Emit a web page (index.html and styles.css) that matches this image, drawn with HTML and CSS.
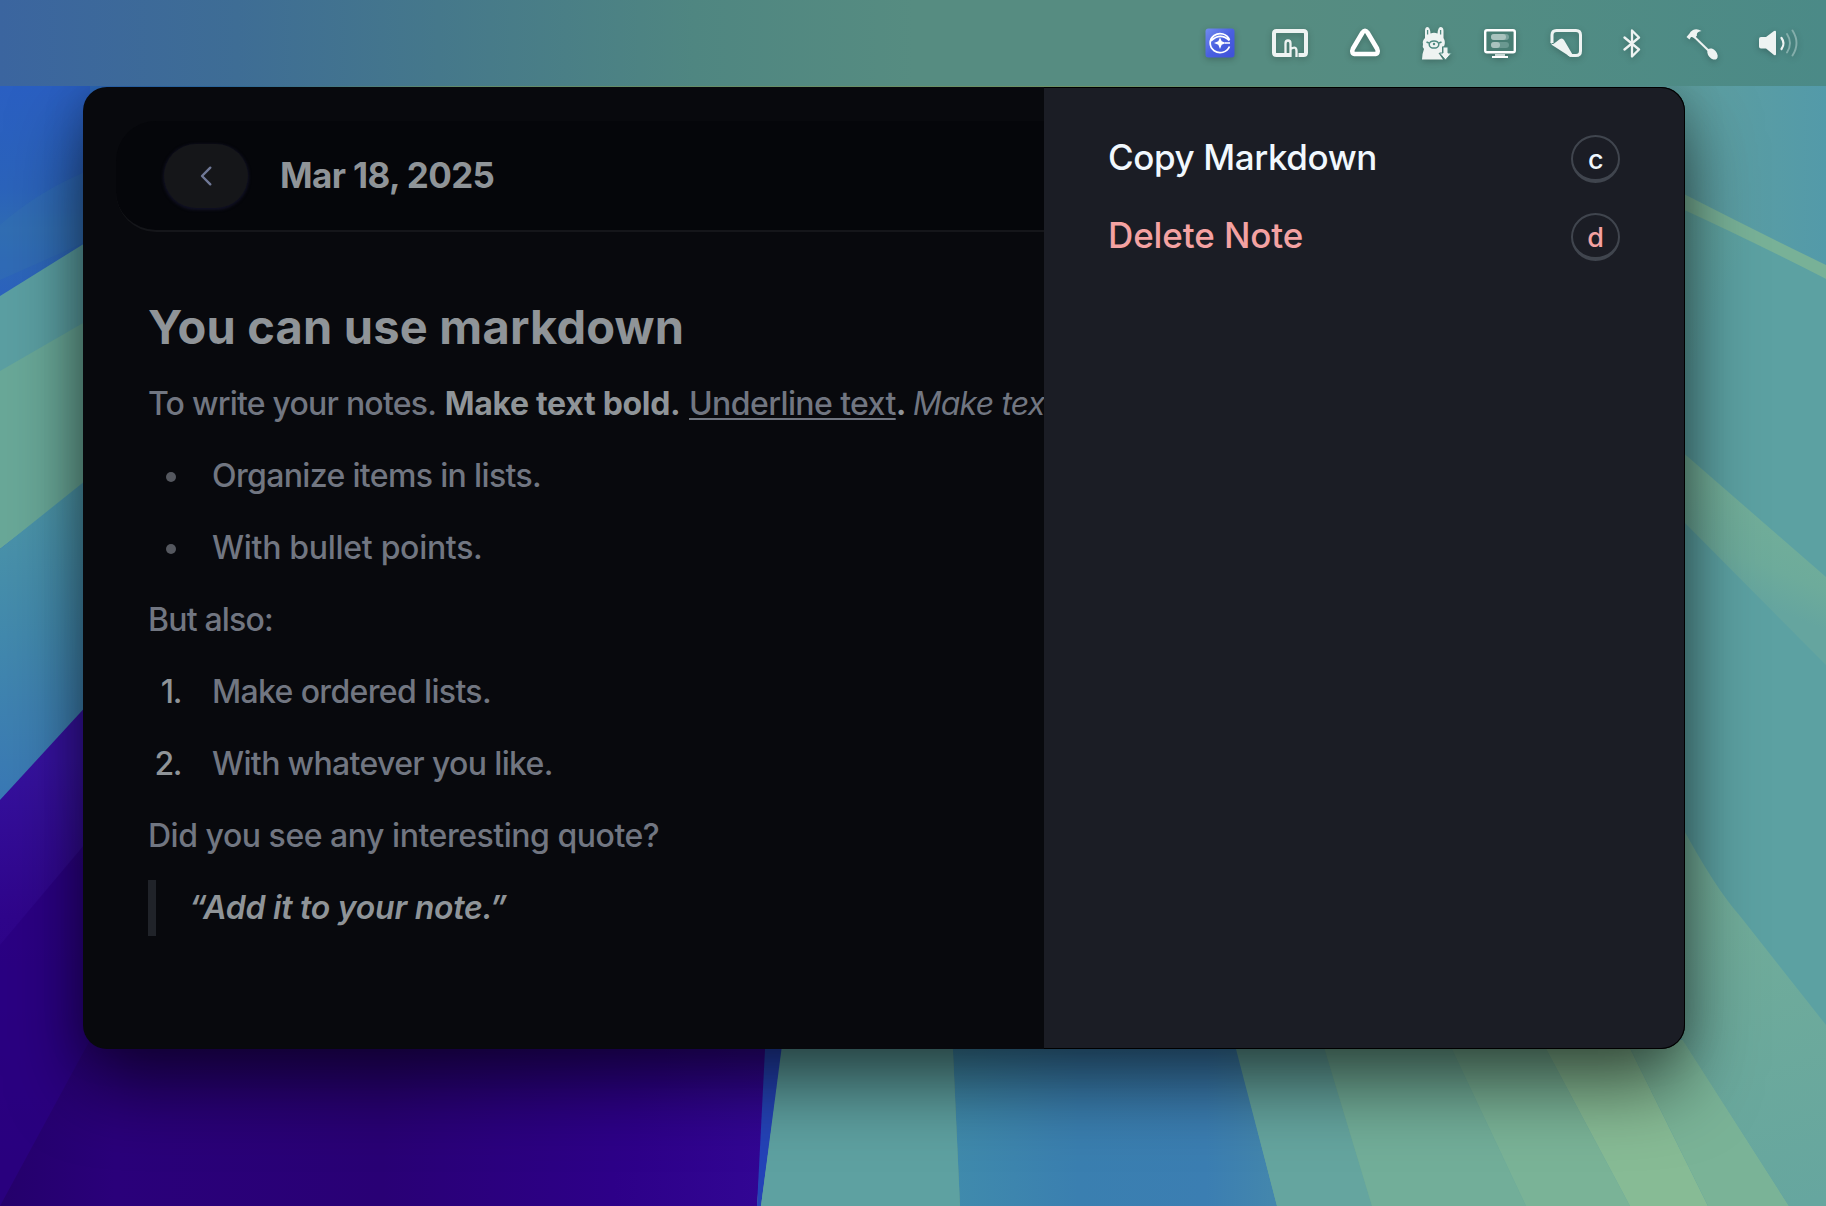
FILE: index.html
```
<!DOCTYPE html>
<html lang="en">
<head>
<meta charset="utf-8">
<title>Notes</title>
<link rel="stylesheet" href="styles.css">
</head>
<body>
<svg class="wallpaper" viewBox="0 0 1826 1206" preserveAspectRatio="none" aria-hidden="true">
  <defs>
    <linearGradient id="sky" x1="0" y1="0" x2="1" y2="0"><stop offset="0" stop-color="#295fc0"/><stop offset=".12" stop-color="#3479b6"/><stop offset=".25" stop-color="#76a77e"/><stop offset=".6" stop-color="#83ad79"/><stop offset=".78" stop-color="#68a89a"/><stop offset=".93" stop-color="#5e9fa1"/><stop offset="1" stop-color="#539aa9"/></linearGradient>
    <linearGradient id="blueL" x1="0" y1="86" x2="0" y2="290" gradientUnits="userSpaceOnUse"><stop offset="0" stop-color="#2a5fc2"/><stop offset=".5" stop-color="#2b63bb"/><stop offset=".7" stop-color="#2f6bb4"/><stop offset="1" stop-color="#2c63bd"/></linearGradient>
    <linearGradient id="tealL" x1="0" y1="500" x2="30" y2="800" gradientUnits="userSpaceOnUse"><stop offset="0" stop-color="#4c95a8"/><stop offset=".45" stop-color="#4289ad"/><stop offset="1" stop-color="#3978b5"/></linearGradient>
    <linearGradient id="purple" x1="0" y1="760" x2="0" y2="1206" gradientUnits="userSpaceOnUse"><stop offset="0" stop-color="#36129f"/><stop offset=".35" stop-color="#2f058b"/><stop offset="1" stop-color="#2a0078"/></linearGradient>
    <linearGradient id="purpleB" x1="0" y1="0" x2="765" y2="0" gradientUnits="userSpaceOnUse"><stop offset="0" stop-color="#24006b"/><stop offset=".15" stop-color="#2a007a"/><stop offset=".5" stop-color="#290075"/><stop offset=".8" stop-color="#2d0088"/><stop offset="1" stop-color="#320694"/></linearGradient>
    <linearGradient id="blueB" x1="950" y1="0" x2="1270" y2="0" gradientUnits="userSpaceOnUse"><stop offset="0" stop-color="#408bac"/><stop offset=".4" stop-color="#3a7fb0"/><stop offset=".8" stop-color="#3b7eb2"/><stop offset="1" stop-color="#4386ad"/></linearGradient>
    <linearGradient id="tealR" x1="1685" y1="0" x2="1826" y2="60" gradientUnits="userSpaceOnUse"><stop offset="0" stop-color="#69a89c"/><stop offset="1" stop-color="#5ca1a2"/></linearGradient>
    <linearGradient id="greenFade" x1="1750" y1="500" x2="1715" y2="585" gradientUnits="userSpaceOnUse"><stop offset="0" stop-color="#72ae99"/><stop offset=".6" stop-color="#6dab9b"/><stop offset="1" stop-color="#65a59f"/></linearGradient>
    <linearGradient id="greenR" x1="1700" y1="880" x2="1800" y2="1206" gradientUnits="userSpaceOnUse"><stop offset="0" stop-color="#72ad99"/><stop offset="1" stop-color="#66a69f"/></linearGradient>
  </defs>
  <rect width="1826" height="1206" fill="url(#sky)"/>
  <path fill="url(#blueL)" d="M0 86H90V240L0 296Z"/>
  <path fill="#3474b2" opacity=".4" d="M0 225Q40 190 90 170V240L0 280Z"/>
  <path fill="#5b9fa2" d="M0 296L90 240V380H0Z"/>
  <path fill="#69a898" d="M0 371L90 319V480L0 549Z"/>
  <path fill="url(#tealL)" d="M0 549L90 477V710L0 800Z"/>
  <path fill="url(#purple)" d="M0 800L90 702V1206H0Z"/>
  <path fill="#2a0080" opacity=".7" d="M0 945L90 838V1206H0Z"/>
  <path fill="url(#purpleB)" d="M0 1206L90 1040H770L757 1206Z"/>
  <path fill="#2443b8" d="M766 1030H785L761 1206H757Z"/>
  <path fill="#5ea1a1" d="M784 1030H952L960 1206H761Z"/>
  <path fill="url(#blueB)" d="M952 1030H1232L1277 1206H960Z"/>
  <path fill="#65a59f" d="M1231 1030H1319L1372 1206H1277Z"/>
  <path fill="#72ae99" d="M1319 1030H1443L1526 1206H1372Z"/>
  <path fill="#7ab397" d="M1443 1030H1536L1630 1206H1526Z"/>
  <path fill="#87bb95" d="M1536 1030H1621L1708 1206H1630Z"/>
  <path fill="#7ab397" d="M1621 1030H1677L1789 1206H1708Z"/>
  <path fill="url(#tealR)" d="M1680 205L1826 279V600H1680Z"/>
  <path fill="#78b197" d="M1680 192Q1750 228 1826 265V279Q1750 240 1680 208Z"/>
  <path fill="url(#tealR)" d="M1680 515L1826 640V1040H1680Z"/>
  <path fill="url(#greenFade)" d="M1680 450L1826 577V665L1680 518Z"/>
  <path fill="url(#greenR)" d="M1680 823Q1715 888 1740 916L1826 1025V1206H1789L1680 1036Z"/>
</svg>

<header class="menubar">
  <svg class="tray" width="30" height="30" viewBox="0 0 30 30"><defs><linearGradient id="app" x1="0" y1="0" x2="1" y2="1"><stop offset="0" stop-color="#718bf0"/><stop offset=".5" stop-color="#4a60e0"/><stop offset="1" stop-color="#3e50d8"/></linearGradient></defs><rect x="-.5" y="-.5" width="29" height="29" rx="3" fill="url(#app)"/><path d="M23.500 10.700A10 9.500 0 1 0 23.500 17.500M5 12Q14 3 23.500 11.500" fill="none" stroke="#fff" stroke-width="1.700"/><path d="M14 8.500L15.700 12.300L20 14L15.700 15.700L14 20L12.300 15.700L8 14L12.300 12.300Z" fill="#fff"/><path d="M19 14H24" stroke="#fff" stroke-width="1.500"/></svg>
  <svg class="tray" width="36" height="30" viewBox="0 0 36 30"><path d="M18 26H4.500Q2 26 2 23.500V4.500Q2 2 4.500 2H31.500Q34 2 34 4.500V23.500Q34 26 31.500 26H26.500" fill="none" stroke="#eef3f2" stroke-width="4"/><path d="M13.500 27V14.500Q13.500 11.500 16 11.500T18.500 14.500V28M18.500 20Q24.500 16.500 24.500 22V28" fill="none" stroke="#eef3f2" stroke-width="2.300"/></svg>
  <svg class="tray" width="30" height="30" viewBox="0 0 30 30"><path d="M12.500 3.500Q15 0 17.500 3.500L27 19.500Q29.500 25 24 25H6Q.5 25 3 19.500Z" fill="none" stroke="#fff" stroke-width="4.600" stroke-linejoin="round"/></svg>
  <svg class="tray llama" width="30" height="34" viewBox="0 0 30 34"><path fill="#eef3f2" d="M3 11V4Q3 0 5.500 0Q8 0 8.500 6.500Q12 5 15.500 6.500Q16 0 18.500 0Q21.500 0 21.500 4V11Q24 15 22 19.500H20V26H16.500L21 32.500H0Q0 27 2 22Q0 20 1 17Q0 14 3 11Z"/><path d="M5.600 3V7.500M18.600 3V7.500" stroke="#4f8b82" stroke-width="1.300"/><ellipse cx="12" cy="17.500" rx="4.800" ry="3.600" fill="none" stroke="#4f8b82" stroke-width="1.500"/><circle cx="12" cy="17" r="1.200" fill="#4f8b82"/><path d="M4.500 15L7 16M17 16L19.500 15" stroke="#4f8b82" stroke-width="1.700"/><path d="M21 20H26V26H29.500L23.500 33L17.500 26H21Z" fill="#eef3f2" stroke="#4f8b82" stroke-width="1"/></svg>
  <svg class="tray" width="32" height="30" viewBox="0 0 32 30"><rect x="1.200" y="1.200" width="29.600" height="22" rx="1.800" fill="#487d73" stroke="#fff" stroke-width="2.400"/><rect x="7" y="5" width="18" height="6" rx="3" fill="#78a19b"/><rect x="7" y="5" width="15" height="6" rx="3" fill="#a9c3be"/><rect x="7" y="13" width="18" height="6" rx="3" fill="#6a9890"/><rect x="7" y="13" width="9" height="6" rx="3" fill="#a9c3be"/><path d="M11 25H21V27H11Z" fill="#c9dad7"/><path d="M8 27H24V29H8Z" fill="#fff"/></svg>
  <svg class="tray" width="32" height="30" viewBox="0 0 32 30"><path d="M2 14V6Q2 1.500 6.500 1.500H26Q30.500 1.500 30.500 6V22Q30.500 26.500 26 26.500H22Q20 26.500 18.500 25" fill="none" stroke="#eef3f2" stroke-width="3"/><path d="M.5 12Q1 16.500 4 14.500L10 10Q12.500 8.500 14 11L22.500 25.500L21 28Q19 27.500 17.500 26L2 16Q.5 14.500 .5 12Z" fill="#eef3f2"/></svg>
  <svg class="tray" width="18" height="30" viewBox="0 0 18 30"><path d="M1.500 8.500L16 20.500L9 27.500V1.500L16 8.500L1.500 20.500" fill="none" stroke="#eef3f2" stroke-width="2.300" stroke-linecap="round" stroke-linejoin="round"/></svg>
  <svg class="tray" width="33" height="32" viewBox="0 0 33 32"><path d="M8 7.500L24 23" stroke="#eef3f2" stroke-width="2"/><path d="M.5 8L3.500 10.500L5 8Q7 7.500 8.500 9.500L11 6.500Q10 3 15.500 2Q11-1 7 1Q4 2.500 3.500 4.500Z" fill="#eef3f2"/><ellipse cx="26.500" cy="25" rx="6.400" ry="4.200" transform="rotate(50 26.500 25)" fill="#eef3f2"/></svg>
  <svg class="tray" width="40" height="30" viewBox="0 0 40 30"><path d="M0 10Q0 8 2 8H7L15 2Q17 1 17 3V25Q17 27 15 26L7 19.500H2Q0 19.500 0 17.500Z" fill="#eef3f2"/><path d="M22.500 9Q26.500 14.500 22.500 20" fill="none" stroke="#eef3f2" stroke-width="2.200" stroke-linecap="round"/><path d="M28 5Q34 14 28 23.500M33.500 1.500Q41.500 14 33.500 26.500" fill="none" stroke="#84aeab" stroke-width="1.900" stroke-linecap="round"/></svg>
</header>

<main class="window">
  <section class="note">
    <div class="note-bar">
      <button class="back" aria-label="Back"><svg width="12" height="20" viewBox="0 0 12 20"><path d="M10.300 1.700L2 10L10.300 18.300" fill="none" stroke="#6f7896" stroke-width="2.400" stroke-linecap="round" stroke-linejoin="round"/></svg></button>
      <span class="date">Mar 18, 2025</span>
    </div>
    <article class="body">
      <h1>You can use markdown</h1>
      <p><span class="plain">To write your notes.</span> <strong>Make text bold.</strong> <u>Underline text</u><strong>.</strong> <em>Make tex</em></p>
      <ul>
        <li><span class="marker bullet"></span><span class="tight">Organize items in lists.</span></li>
        <li><span class="marker bullet"></span><span class="loose">With bullet points.</span></li>
      </ul>
      <p class="tighter">But also:</p>
      <ol>
        <li><span class="marker">1.</span><span class="tight">Make ordered lists.</span></li>
        <li><span class="marker">2.</span><span class="tight">With whatever you like.</span></li>
      </ol>
      <p class="question">Did you see any interesting quote?</p>
      <blockquote>“Add it to your note.”</blockquote>
    </article>
  </section>
  <aside class="actions">
    <div class="action"><span class="label">Copy Markdown</span><kbd>c</kbd></div>
    <div class="action danger"><span class="label">Delete Note</span><kbd>d</kbd></div>
  </aside>
</main>
</body>
</html>
```
FILE: styles.css
```
* { box-sizing: border-box; }

body {
  margin: 0;
  width: 1826px;
  height: 1206px;
  overflow: hidden;
  position: relative;
  font-family: Inter, "Liberation Sans", sans-serif;
  background: #5ea1a1;
}

.wallpaper {
  position: absolute;
  inset: 0;
  width: 1826px;
  height: 1206px;
}

.menubar {
  position: relative;
  z-index: 2;
  display: grid;
  grid-template-columns: 66px 78px 72px 62px 66px 73px 63px 73px 67px;
  justify-content: end;
  height: 86px;
  padding-top: 29px;
  background: linear-gradient(90deg, #3b659f 0, #3e6d95 13%, #45788b 24%, #4f8681 38%, #568c81 50%, #568c81 70%, #528c83 82%, #4b8a87 100%);
}

.tray {
  overflow: visible;
  filter: drop-shadow(0 2px 3px rgba(0, 0, 0, .22));
}

.llama { margin-top: -2px; }

.window {
  position: relative;
  display: flex;
  width: 1602px;
  height: 962px;
  margin: 1px 0 0 83px;
  border-radius: 24px;
  background: #08090d;
  box-shadow: 0 36px 72px rgba(0, 0, 0, .56), 0 0 40px rgba(0, 0, 0, .18);
}

.note {
  width: 961px;
  padding-top: 34px;
  overflow: hidden;
  border-radius: 24px 0 0 24px;
}

.note-bar {
  display: flex;
  align-items: center;
  width: 1000px;
  height: 111px;
  margin-left: 33px;
  padding-left: 48px;
  border-bottom: 2px solid #15161a;
  border-radius: 40px;
  background: #05060a;
}

.back {
  display: flex;
  align-items: center;
  justify-content: center;
  width: 84px;
  height: 64px;
  padding: 0;
  border: 0;
  border-radius: 32px;
  background: #151619;
  box-shadow: 0 1px 3px 1px #111124;
}

.date {
  margin: -2px 0 0 32px;
  font-size: 35px;
  font-weight: 650;
  letter-spacing: -.6px;
  color: #8f9498;
}

.body {
  padding: 63px 0 0 65px;
  font-size: 32px;
  font-weight: 450;
  line-height: 48px;
  color: #717681;
  white-space: nowrap;
}

h1 {
  margin: 0 0 21px;
  font-size: 47px;
  line-height: 64px;
  font-weight: 700;
  letter-spacing: .2px;
  color: #8f9498;
}

p, ul, ol, blockquote { margin: 0 0 24px; padding: 0; }
ul, ol { list-style: none; }
li { display: flex; margin-bottom: 24px; }

strong { font-weight: 700; letter-spacing: -.3px; color: #8f9498; }
u { letter-spacing: -.6px; text-decoration-thickness: 2px; text-underline-offset: 3px; }
em { margin-left: -2px; letter-spacing: -.8px; }

.tight { letter-spacing: -.65px; }
.plain { letter-spacing: -.78px; }
.tighter { letter-spacing: -.8px; }
.loose { letter-spacing: -.3px; }
.question { letter-spacing: -.47px; }

.marker {
  width: 33px;
  margin-right: 31px;
  letter-spacing: -1.400px;
  text-align: right;
  color: #8f9498;
}

.bullet {
  width: 10px;
  height: 10px;
  margin: 20px 36px 0 18px;
  border-radius: 50%;
  background: #55585f;
}

blockquote {
  display: flex;
  align-items: center;
  height: 56px;
  margin-top: -4px;
  padding-left: 33px;
  border-left: 8px solid #202329;
  font-style: italic;
  font-weight: 570;
  letter-spacing: -.25px;
  color: #8f9498;
}

.actions {
  width: 641px;
  padding: 47px 64px 0 64px;
  border: 1px solid #000;
  border-left: 0;
  border-radius: 0 24px 24px 0;
  background: #1b1d25;
}

.action {
  display: flex;
  align-items: center;
  justify-content: space-between;
  height: 48px;
  margin-bottom: 30px;
  font-size: 35px;
  font-weight: 450;
  letter-spacing: -.4px;
  color: #f1f8fe;
  white-space: nowrap;
}

.label { padding-bottom: 4px; }

.danger { color: #f4a2a2; letter-spacing: -.1px; }

kbd {
  display: flex;
  align-items: center;
  justify-content: center;
  width: 49px;
  height: 48px;
  padding-top: 2px;
  border: 2px solid #40454e;
  border-bottom-width: 4px;
  border-radius: 50%;
  font: 500 27px Inter, sans-serif;
}
```
